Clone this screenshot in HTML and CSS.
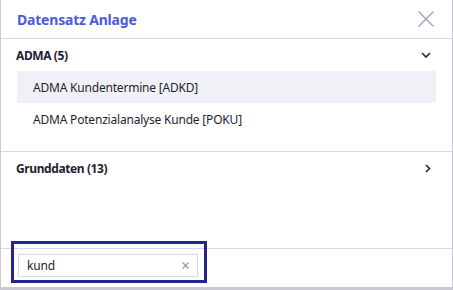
FILE: index.html
```html
<!DOCTYPE html>
<html lang="de">
<head>
<meta charset="utf-8">
<link rel="stylesheet" href="styles.css">
</head>
<body>
<div class="modal">
  <header class="modal-header">
    <h1 class="title">Datensatz Anlage</h1>
    <button class="close" aria-label="Schließen">
      <svg width="16" height="16" viewBox="0 0 16 16"><path d="M0.5 0.5 L15.5 15.5 M15.5 0.5 L0.5 15.5" stroke="#9d9fbe" stroke-width="1.4" fill="none"/></svg>
    </button>
  </header>
  <div class="modal-body">
    <section class="group open">
      <div class="group-head">
        <span>ADMA (5)</span>
        <svg class="chev" width="10" height="6" viewBox="0 0 10 6"><path d="M1 1 L5 5 L9 1" stroke="#23233a" stroke-width="1.6" fill="none"/></svg>
      </div>
      <ul class="items">
        <li class="item active">ADMA Kundentermine [ADKD]</li>
        <li class="item">ADMA Potenzialanalyse Kunde [POKU]</li>
      </ul>
    </section>
    <section class="group">
      <div class="group-head">
        <span>Grunddaten (13)</span>
        <svg class="chev" width="6" height="9" viewBox="0 0 6 9"><path d="M1 1 L4.5 4.5 L1 8" stroke="#23233a" stroke-width="1.6" fill="none"/></svg>
      </div>
    </section>
  </div>
  <footer class="modal-footer">
    <div class="search">
      <span class="search-text">kund</span>
      <svg class="clear" width="7" height="7" viewBox="0 0 7 7"><path d="M0.5 0.5 L6.5 6.5 M6.5 0.5 L0.5 6.5" stroke="#9ea0c0" stroke-width="1.5" fill="none"/></svg>
    </div>
    <div class="focus-ring"></div>
  </footer>
</div>
</body>
</html>
```
FILE: styles.css
```css
html, body {
  margin: 0;
  padding: 0;
}
body {
  background: #c9c9d3;
  width: 453px;
  height: 290px;
  overflow: hidden;
  font-family: "Noto Sans", "Open Sans", sans-serif;
  color: #1e1e30;
}
.modal {
  margin-left: 1px;
  width: 451px;
  height: 287px;
  background: #ffffff;
  display: flex;
  flex-direction: column;
  position: relative;
}
.modal-header {
  height: 38px;
  border-bottom: 1px solid #d8d9e2;
  display: flex;
  align-items: center;
  justify-content: space-between;
  padding: 0 18px 0 16px;
  box-sizing: content-box;
}
.title {
  margin: 0;
  font-size: 14px;
  font-weight: 700;
  letter-spacing: -0.2px;
  color: #4a5bdc;
}
.close {
  border: 0;
  background: none;
  padding: 0;
  width: 16px;
  height: 16px;
  display: block;
}
.close svg { display: block; }
.modal-body {
  flex: 1;
}
.group {
  border-bottom: 1px solid #d8d9e2;
}
.group:last-child {
  border-bottom: 0;
}
.group.open {
  padding-bottom: 16px;
}
.group-head {
  height: 32px;
  display: flex;
  align-items: center;
  justify-content: space-between;
  padding: 0 21px 0 15px;
  font-size: 12px;
  font-weight: 700;
  letter-spacing: -0.4px;
}
.items {
  list-style: none;
  margin: 0;
  padding: 0 16px;
}
.item {
  height: 32px;
  display: flex;
  align-items: center;
  padding-left: 16px;
  font-size: 12px;
  letter-spacing: -0.2px;
  color: #1e1e30;
}
.item.active {
  background: #f0f1f6;
}
.modal-footer {
  height: 39px;
  border-top: 1px solid #d8d9e2;
  padding: 5px 0 0 17px;
  box-sizing: border-box;
}
.search {
  width: 180px;
  height: 23px;
  box-sizing: border-box;
  border: 1px solid #d8d9e2;
  display: flex;
  align-items: center;
  justify-content: space-between;
  padding: 0 8px 0 8px;
  font-size: 12px;
  letter-spacing: -0.2px;
}
.clear { display: block; }
.focus-ring {
  position: absolute;
  left: 10px;
  top: 241px;
  width: 196px;
  height: 42px;
  box-sizing: border-box;
  border: 3px solid #25258e;
}
```
